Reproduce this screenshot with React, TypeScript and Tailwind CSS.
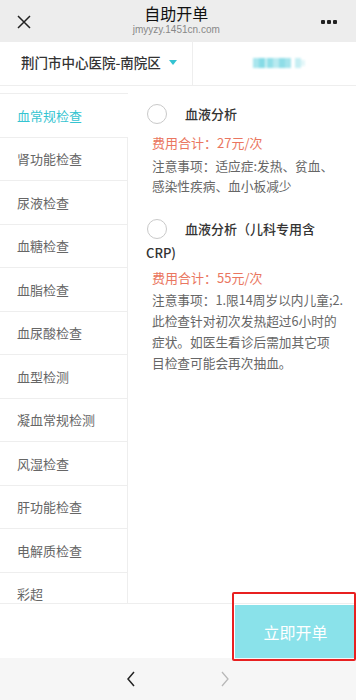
import React from 'react'

const categories = [
  '血常规检查',
  '肾功能检查',
  '尿液检查',
  '血糖检查',
  '血脂检查',
  '血尿酸检查',
  '血型检测',
  '凝血常规检测',
  '风湿检查',
  '肝功能检查',
  '电解质检查',
  '彩超',
]

function Radio() {
  return (
    <span className="inline-block w-[20px] h-[20px] rounded-full border-[1.5px] border-[#c9c9c9] align-middle mr-[18px] ml-[1px] -mt-[3px]" />
  )
}

export default function App() {
  return (
    <div
      className="relative w-[356px] h-[700px] bg-white flex flex-col overflow-hidden"
      style={{ fontFamily: '"Noto Sans CJK SC", "Noto Sans", sans-serif' }}
    >
      {/* top bar */}
      <div className="h-[42px] bg-[#ededed] flex items-center justify-between px-[17px] shrink-0">
        <svg width="14" height="14" viewBox="0 0 14 14" className="mt-[2px]">
          <path d="M1 1L13 13M13 1L1 13" stroke="#222" strokeWidth="1.5" />
        </svg>
        <div className="self-start pt-[3px] flex flex-col items-center">
          <div className="text-[16px] leading-[20px] text-[#111]">自助开单</div>
          <div className="text-[10px] leading-[12px] text-[#888] mt-[1px]" style={{ fontFamily: '"Liberation Sans", sans-serif' }}>
            jmyyzy.1451cn.com
          </div>
        </div>
        <div className="flex gap-[2.5px] mt-[2px] mr-[2px]">
          <span className="w-[3.5px] h-[3.5px] bg-[#222] rounded-[1px]" />
          <span className="w-[3.5px] h-[3.5px] bg-[#222] rounded-[1px]" />
          <span className="w-[3.5px] h-[3.5px] bg-[#222] rounded-[1px]" />
        </div>
      </div>

      {/* hospital bar */}
      <div className="h-[44px] flex border-b border-[#eeeeee] shrink-0">
        <div className="w-[193px] border-r border-[#eeeeee] flex items-center pl-[21px] -mt-[2px]">
          <span className="text-[13.5px] text-[#333] font-medium">荆门市中心医院-南院区</span>
          <svg width="8" height="6" viewBox="0 0 8 6" className="ml-[8px]">
            <path d="M0 0H8L4 5Z" fill="#34c3d2" />
          </svg>
        </div>
        <div className="flex-1 flex items-center justify-center -mt-[2px] pl-[8px]">
          <div className="flex items-center blur-[1px]">
            <span className="w-[6px] h-[10px] bg-[#a9e6ee]" />
            <span className="w-[6px] h-[10px] bg-[#86dbe6]" />
            <span className="w-[2px] h-[10px] bg-[#d4f3f6]" />
            <span className="w-[6px] h-[10px] bg-[#92dfe8]" />
            <span className="w-[6px] h-[10px] bg-[#b7eaf0]" />
            <span className="w-[6px] h-[10px] bg-[#8fdde7]" />
            <span className="w-[6px] h-[10px] bg-[#a5e4ec]" />
            <span className="w-[6px] h-[10px] ml-[4px] bg-[#c6eef3]" />
            <span className="w-[4px] h-[6px] bg-[#e3f7f9]" />
          </div>
        </div>
      </div>

      {/* main */}
      <div className="flex-1 flex overflow-hidden min-h-0">
        <div className="w-[128px] shrink-0 mt-[7px] border-t border-[#eeeeee]">
          {categories.map((c, i) => (
            <div
              key={c}
              className={
                i === 0
                  ? 'h-[43.5px] flex items-center pl-[17px] border-b border-[#eeeeee] text-[13px] text-[#35c4d1]'
                  : 'h-[43.5px] flex items-center pl-[17px] border-b border-r border-[#eeeeee] text-[13px] text-[#666]'
              }
            >
              {c}
            </div>
          ))}
        </div>

        <div className="flex-1 pl-[18px] pt-[16px] pr-[6px]">
          <div>
            <div className="text-[13px] leading-[24px] text-[#333] font-medium">
              <Radio />
              血液分析
            </div>
            <div className="pl-[6px] mt-[6px] text-[13px] leading-[22px] text-[#ea7660]">费用合计：27元/次</div>
            <div className="pl-[6px] mt-[2px] text-[12.7px] leading-[20px] text-[#666] whitespace-nowrap">
              注意事项：适应症:发热、贫血、
              <br />
              感染性疾病、血小板减少
            </div>
          </div>

          <div className="mt-[21px]">
            <div className="text-[13px] leading-[24px] text-[#333] font-medium whitespace-nowrap">
              <Radio />
              血液分析（儿科专用含
              <br />
              CRP)
            </div>
            <div className="pl-[6px] mt-[2px] text-[13px] leading-[22px] text-[#ea7660]">费用合计：55元/次</div>
            <div className="pl-[6px] text-[12.7px] leading-[21px] text-[#666] whitespace-nowrap">
              注意事项：1.限14周岁以内儿童;2.
              <br />
              此检查针对初次发热超过6小时的
              <br />
              症状。如医生看诊后需加其它项
              <br />
              目检查可能会再次抽血。
            </div>
          </div>
        </div>
      </div>

      {/* bottom action */}
      <div className="h-[55px] border-t border-[#eeeeee] flex justify-end shrink-0 bg-white">
        <button className="w-[121px] mt-[1px] bg-[#8ae2ea] text-white text-[16px]">立即开单</button>
      </div>

      {/* browser nav */}
      <div className="h-[42px] bg-[#f6f6f6] flex items-center shrink-0">
        <svg width="10" height="16" viewBox="0 0 10 16" className="ml-[126px]">
          <path d="M8 1L2 8L8 15" stroke="#222" strokeWidth="1.5" fill="none" />
        </svg>
        <svg width="10" height="16" viewBox="0 0 10 16" className="ml-[84px]">
          <path d="M2 1L8 8L2 15" stroke="#b8b8b8" strokeWidth="1.3" fill="none" />
        </svg>
      </div>

      {/* annotation box */}
      <div className="absolute left-[232px] top-[592px] w-[124px] h-[69px] border-2 border-[#e82020] rounded-[2px] pointer-events-none" />
    </div>
  )
}
